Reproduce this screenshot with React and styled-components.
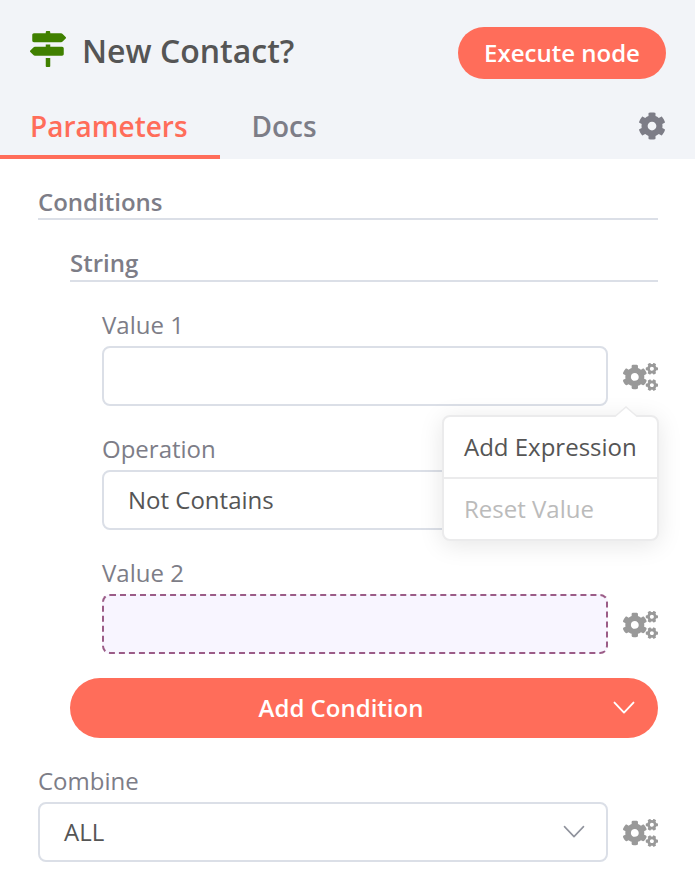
import React from 'react';
import styled, { createGlobalStyle, css } from 'styled-components';
import { FaMapSigns, FaCog, FaCogs } from 'react-icons/fa';

const GlobalStyle = createGlobalStyle`
  *, *::before, *::after { box-sizing: border-box; }
  body {
    margin: 0;
    background: #fff;
    font-family: "Open Sans", "Noto Sans", sans-serif;
    font-size: 24px;
    color: #555;
    -webkit-font-smoothing: antialiased;
  }
  button { font-family: inherit; cursor: pointer; }
`;

const Panel = styled.main`
  width: 695px;
  height: 874px;
  overflow: hidden;
  background: #fff;
`;

const Header = styled.header`
  height: 159px;
  display: flex;
  flex-direction: column;
  justify-content: space-between;
  background: #f2f4f8;
`;

const TitleBar = styled.div`
  display: flex;
  align-items: center;
  padding: 27px 29px 0 30px;
`;

const NodeIcon = styled(FaMapSigns)`
  width: 36px;
  height: 36px;
  margin-top: -8px;
  color: #408000;
`;

const Title = styled.h1`
  flex: 1;
  margin: -4px 0 0 16px;
  font-size: 32px;
  line-height: 44px;
  font-weight: 600;
  white-space: nowrap;
`;

const ExecuteButton = styled.button`
  width: 208px;
  height: 52px;
  padding: 0 0 2px;
  border: 0;
  border-radius: 26px;
  background: #ff6d5a;
  color: #fff;
  font-size: 24px;
  font-weight: 600;
  white-space: nowrap;
`;

const Tabs = styled.nav`
  display: flex;
  height: 65px;
`;

const Tab = styled.a`
  height: 65px;
  padding: 0 32px 0 ${({ $active }) => ($active ? '30px' : '31.5px')};
  width: ${({ $active }) => ($active ? '220px' : 'auto')};
  border-bottom: 4px solid ${({ $active }) => ($active ? '#ff6d5a' : 'transparent')};
  color: ${({ $active }) => ($active ? '#ff6d5a' : '#7d7d87')};
  font-size: 28px;
  line-height: 64px;
  font-weight: 600;
`;

const SettingsIcon = styled(FaCog)`
  width: 28px;
  height: 28px;
  margin: 18px 29px 0 auto;
  color: #7d7d87;
`;

const Parameters = styled.section`
  padding: 27px 37px 0 38px;
`;

const SectionTitle = styled.h2`
  margin: 0;
  height: 34px;
  border-bottom: 2px solid #dbdfe7;
  color: #7d7d87;
  font-size: 24px;
  line-height: ${({ $nested }) => ($nested ? '29px' : '31px')};
  font-weight: 600;
`;

const Group = styled.div`
  padding: 28px 0 0 32px;
`;

const Fields = styled.div`
  display: flex;
  flex-direction: column;
  gap: 24px;
  padding: 24px 0 24px 32px;
`;

const Field = styled.div`
  position: relative;
`;

const Label = styled.label`
  display: block;
  height: 40px;
  color: #7d7d87;
  line-height: 37px;
`;

const Control = styled.div`
  display: flex;
  align-items: center;
  justify-content: space-between;
`;

const box = css`
  flex: 1;
  height: 60px;
  border: 2px solid #dbdfe7;
  border-radius: 8px;
`;

const Input = styled.div`
  ${box}
  ${({ $expression }) => $expression && css`
    border: 2px dashed #9b5c87;
    background: #f8f5ff;
  `}
`;

const Select = styled.div`
  ${box}
  display: flex;
  align-items: center;
  justify-content: space-between;
  padding: 0 21px 0 24px;
  color: #555;
  line-height: 56px;
`;

const OptionsIcon = styled(FaCogs)`
  width: 35px;
  height: 28px;
  margin: 2px 0 0 15px;
  flex: none;
  color: #999;
`;

const AddButton = styled.button`
  display: flex;
  align-items: center;
  width: 100%;
  height: 60px;
  padding: 0 23px 0 0;
  border: 0;
  border-radius: 30px;
  background: #ff6d5a;
  color: #fff;
  font-size: 24px;
  font-weight: 600;
`;

const AddLabel = styled.span`
  flex: 1;
  padding: 0 1px 2px 0;
  text-align: center;
`;

const CombineField = styled(Field)`
  margin-top: 24px;
`;

const ChevronSvg = styled.svg`
  width: 22px;
  height: 14px;
  flex: none;
  fill: none;
  stroke: currentColor;
  stroke-width: ${({ $thick }) => ($thick ? 1.9 : 1.6)};
  stroke-linecap: round;
  stroke-linejoin: round;
  color: ${({ $thick }) => ($thick ? '#fff' : '#90939d')};
`;

const Menu = styled.ul`
  position: absolute;
  z-index: 2;
  top: 109px;
  right: -1px;
  width: 217px;
  margin: 0;
  padding: 0;
  list-style: none;
  border: 2px solid #ebebec;
  border-radius: 8px;
  background: #fff;
  box-shadow: 0 4px 24px rgba(0, 0, 0, 0.1);
`;

const MenuArrow = styled.svg`
  position: absolute;
  top: -11px;
  left: 171px;
  width: 22px;
  height: 12px;
`;

const MenuItem = styled.li`
  height: ${({ $disabled }) => ($disabled ? '60px' : '62px')};
  padding-left: 20px;
  border-bottom: ${({ $disabled }) => ($disabled ? '0' : '2px solid #ebebec')};
  color: ${({ $disabled }) => ($disabled ? '#bbb' : '#555')};
  line-height: 60px;
  white-space: nowrap;
`;

function Chevron({ thick }) {
  return (
    <ChevronSvg $thick={thick} viewBox="0 0 22 14" aria-hidden="true">
      <path d="M1.5 1.6 11 11.6 20.5 1.6" />
    </ChevronSvg>
  );
}

function OptionsMenu() {
  return (
    <Menu>
      <MenuArrow viewBox="0 0 22 12" aria-hidden="true">
        <path d="M0 11 11 1 22 11V12H0Z" fill="#fff" />
        <path d="M0 10.5 11 1 22 10.5" fill="none" stroke="#ebebec" strokeWidth="1.5" />
      </MenuArrow>
      <MenuItem>Add Expression</MenuItem>
      <MenuItem $disabled>Reset Value</MenuItem>
    </Menu>
  );
}

export default function App() {
  return (
    <>
      <GlobalStyle />
      <Panel>
        <Header>
          <TitleBar>
            <NodeIcon />
            <Title>New Contact?</Title>
            <ExecuteButton>Execute node</ExecuteButton>
          </TitleBar>
          <Tabs>
            <Tab $active>Parameters</Tab>
            <Tab>Docs</Tab>
            <SettingsIcon />
          </Tabs>
        </Header>
        <Parameters>
          <SectionTitle>Conditions</SectionTitle>
          <Group>
            <SectionTitle $nested>String</SectionTitle>
            <Fields>
              <Field>
                <Label>Value 1</Label>
                <Control>
                  <Input />
                  <OptionsIcon />
                </Control>
                <OptionsMenu />
              </Field>
              <Field>
                <Label>Operation</Label>
                <Control>
                  <Select>
                    Not Contains
                    <Chevron />
                  </Select>
                  <OptionsIcon />
                </Control>
              </Field>
              <Field>
                <Label>Value 2</Label>
                <Control>
                  <Input $expression />
                  <OptionsIcon />
                </Control>
              </Field>
            </Fields>
            <AddButton>
              <AddLabel>Add Condition</AddLabel>
              <Chevron thick />
            </AddButton>
          </Group>
          <CombineField>
            <Label>Combine</Label>
            <Control>
              <Select>
                ALL
                <Chevron />
              </Select>
              <OptionsIcon />
            </Control>
          </CombineField>
        </Parameters>
      </Panel>
    </>
  );
}
